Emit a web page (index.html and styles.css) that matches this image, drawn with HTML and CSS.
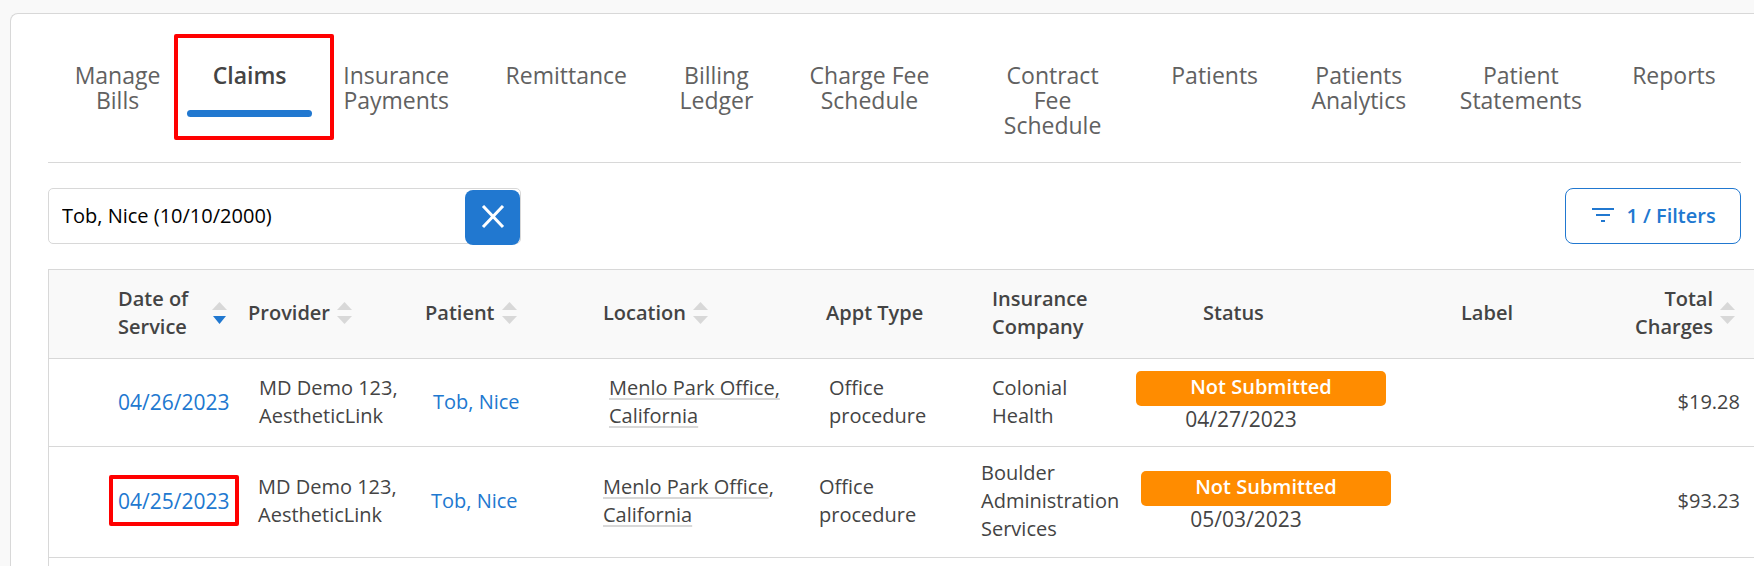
FILE: index.html
```html
<!DOCTYPE html>
<html lang="en">
<head>
    <meta charset="UTF-8">
    <meta name="viewport" content="width=device-width, initial-scale=1.0">
    <title>Claims</title>
    <link rel="stylesheet" href="styles.css">
</head>
<body>
    <main class="card">
        <!-- Billing tabs -->
        <nav class="tabs">
            <a href="#" class="tab">Manage<br>Bills</a>
            <a href="#" class="tab active marked">Claims</a>
            <a href="#" class="tab">Insurance<br>Payments</a>
            <a href="#" class="tab">Remittance</a>
            <a href="#" class="tab">Billing<br>Ledger</a>
            <a href="#" class="tab">Charge Fee<br>Schedule</a>
            <a href="#" class="tab">Contract<br>Fee<br>Schedule</a>
            <a href="#" class="tab">Patients</a>
            <a href="#" class="tab">Patients<br>Analytics</a>
            <a href="#" class="tab">Patient<br>Statements</a>
            <a href="#" class="tab">Reports</a>
        </nav>

        <!-- Search and filters -->
        <div class="toolbar">
            <div class="search">
                <input type="text" aria-label="Search patient" value="Tob, Nice (10/10/2000)">
                <button type="button" class="clear" aria-label="Clear search">
                    <svg width="24" height="24" viewBox="0 0 24 24"><path d="M2 1L22 22M22 1L2 22" stroke="#fff" stroke-width="3" fill="none"/></svg>
                </button>
            </div>
            <button type="button" class="filters">
                <svg width="22" height="16" viewBox="0 0 22 16"><path d="M0 2H22M4 8H18M9 14H13" stroke="currentColor" stroke-width="2" fill="none"/></svg>
                1 / Filters
            </button>
        </div>

        <!-- Claims list -->
        <table class="claims">
            <thead>
                <tr>
                    <th></th>
                    <th class="date-head">
                        <span>Date of Service</span>
                        <svg class="sort" width="15" height="22" viewBox="0 0 15 22"><path d="M0 8L7.5 0L15 8Z"/><path class="on" d="M1 14H14L7.5 22Z"/></svg>
                    </th>
                    <th>
                        <span>Provider</span>
                        <svg class="sort" width="15" height="22" viewBox="0 0 15 22"><path d="M0 8L7.5 0L15 8Z"/><path d="M0 14H15L7.5 22Z"/></svg>
                    </th>
                    <th>
                        <span>Patient</span>
                        <svg class="sort" width="15" height="22" viewBox="0 0 15 22"><path d="M0 8L7.5 0L15 8Z"/><path d="M0 14H15L7.5 22Z"/></svg>
                    </th>
                    <th>
                        <span>Location</span>
                        <svg class="sort" width="15" height="22" viewBox="0 0 15 22"><path d="M0 8L7.5 0L15 8Z"/><path d="M0 14H15L7.5 22Z"/></svg>
                    </th>
                    <th>Appt Type</th>
                    <th>Insurance<br>Company</th>
                    <th>Status</th>
                    <th>Label</th>
                    <th class="total-head">
                        <span>Total<br>Charges</span>
                        <svg class="sort" width="15" height="22" viewBox="0 0 15 22"><path d="M0 8L7.5 0L15 8Z"/><path d="M0 14H15L7.5 22Z"/></svg>
                    </th>
                </tr>
            </thead>
            <tbody>
                <tr class="claim">
                    <td></td>
                    <td class="date"><a href="#">04/26/2023</a></td>
                    <td>MD Demo 123,<br>AestheticLink</td>
                    <td><a href="#">Tob, Nice</a></td>
                    <td><span class="place">Menlo Park Office,<br>California</span></td>
                    <td>Office<br>procedure</td>
                    <td>Colonial<br>Health</td>
                    <td class="status">
                        <div class="badge">Not Submitted</div>
                        <div class="status-date">04/27/2023</div>
                    </td>
                    <td></td>
                    <td class="total">$19.28</td>
                </tr>
                <tr class="claim claim-wide">
                    <td></td>
                    <td class="date"><a href="#" class="marked">04/25/2023</a></td>
                    <td>MD Demo 123,<br>AestheticLink</td>
                    <td><a href="#">Tob, Nice</a></td>
                    <td><div><span class="place">Menlo Park Office</span>,<br><span class="place">California</span></div></td>
                    <td>Office<br>procedure</td>
                    <td>Boulder<br>Administration<br>Services</td>
                    <td class="status">
                        <div class="badge">Not Submitted</div>
                        <div class="status-date">05/03/2023</div>
                    </td>
                    <td></td>
                    <td class="total">$93.23</td>
                </tr>
            </tbody>
        </table>
    </main>
</body>
</html>
```
FILE: styles.css
```css
* {
    box-sizing: border-box;
}
body {
    display: flex;
    min-height: 100vh;
    margin: 0;
    padding: 13px 0 0 10px;
    background-color: #f9f9f9;
    color: #444;
    font-family: "Open Sans", "Noto Sans", sans-serif;
    font-size: 20px;
    line-height: 28px;
}
a {
    color: #2178d0;
    text-decoration: none;
}
button, input {
    font-family: inherit;
    font-size: 20px;
}
.card {
    flex: 1;
    display: flex;
    flex-direction: column;
    padding-left: 37px;
    background-color: white;
    border: 1px solid #d8d8d8;
    border-right: none;
    border-bottom: none;
    border-radius: 8px 0 0 0;
}
/* Tabs */
.tabs {
    display: grid;
    grid-template-columns: 139fr 125fr 168fr 172fr 128fr 178fr 188fr 136fr 152fr 172fr 134fr;
    margin-right: 13px;
    padding: 49px 0 24px;
    border-bottom: 1px solid #d8d8d8;
}
.tab {
    position: relative;
    color: #616161;
    font-size: 23px;
    line-height: 25px;
    text-align: center;
}
.tab.active {
    color: #444;
    font-weight: 600;
}
.tab.active::after {
    content: "";
    position: absolute;
    top: 47px;
    left: 0;
    right: 0;
    height: 7px;
    background-color: #2178d0;
    border-radius: 4px;
}
/* Red frame round the item to click */
.marked {
    position: relative;
}
.marked::before {
    content: "";
    position: absolute;
    inset: -12px -10px -11px -9px;
    border: 4px solid #f00;
    border-radius: 2px;
}
.tab.marked::before {
    inset: -29px -22px -2px -13px;
}
/* Search row */
.toolbar {
    display: flex;
    justify-content: space-between;
    margin: 25px 13px 25px 0;
}
.search {
    position: relative;
    flex: 0 1 473px;
}
.search input {
    width: 100%;
    height: 56px;
    padding: 0 60px 2px 13px;
    border: 1px solid #d8d8d8;
    border-radius: 5px;
    color: #000;
}
.clear {
    position: absolute;
    top: 2px;
    right: 1px;
    display: flex;
    align-items: center;
    justify-content: center;
    width: 55px;
    height: 55px;
    padding: 0 0 2px;
    background-color: #2178d0;
    border: none;
    border-radius: 8px;
}
.filters {
    display: flex;
    align-items: center;
    justify-content: center;
    gap: 12px;
    width: 176px;
    height: 56px;
    padding: 0 0 2px 2px;
    background-color: white;
    border: 1px solid #2178d0;
    border-radius: 8px;
    color: #2178d0;
    font-weight: 600;
}
/* Claims table */
.claims {
    flex: 1;
    display: block;
    border-top: 1px solid #d8d8d8;
    border-left: 1px solid #d8d8d8;
}
.claims thead, .claims tbody {
    display: block;
}
.claims tr {
    display: grid;
    align-items: center;
    border-bottom: 1px solid #d8d8d8;
}
.claims th, .claims td {
    padding: 0;
    text-align: left;
    white-space: nowrap;
}
.claims thead tr {
    grid-template-columns: 69fr 130fr 177fr 178fr 223fr 166fr 211fr 258fr 150fr 143fr;
    padding: 15px 0 17px;
    background-color: #f9f9f9;
}
.claims th {
    display: flex;
    align-items: center;
    gap: 7px;
    font-weight: 600;
}
.claims .date-head {
    padding-right: 21px;
    white-space: normal;
}
.date-head span {
    flex: 1;
}
.claims .total-head {
    justify-content: flex-end;
    padding-right: 19px;
    text-align: right;
}
.sort {
    flex: none;
    fill: #d8d8d8;
}
.sort .on {
    fill: #2178d0;
}
.claim {
    grid-template-columns: 69fr 141fr 174fr 176fr 220fr 163fr 144fr 250fr 239fr 129fr;
    padding: 12px 0 14px;
}
.claim-wide {
    grid-template-columns: 69fr 140fr 173fr 172fr 216fr 162fr 160fr 250fr 239fr 124fr;
}
.date, .status-date {
    font-size: 21px;
}
.place {
    text-decoration: underline 2px #d8d8d8;
    text-decoration-skip-ink: none;
    text-underline-offset: 3px;
}
.badge {
    height: 35px;
    padding-top: 2px;
    background-color: #ff8c00;
    border-radius: 5px;
    color: white;
    font-weight: 600;
    text-align: center;
}
.status-date {
    padding-right: 40px;
    line-height: 26px;
    text-align: center;
}
.claims .total {
    padding-right: 14px;
    text-align: right;
}
```
